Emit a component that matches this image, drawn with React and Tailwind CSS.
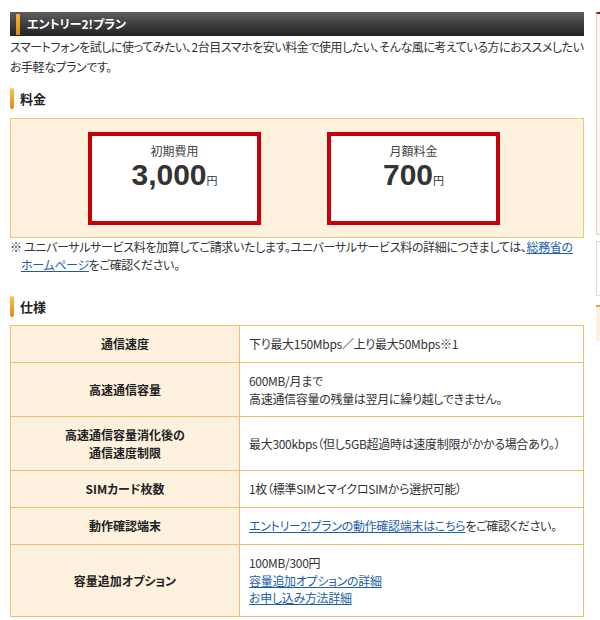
import React from 'react'

const SPEC = [
  { label: ['通信速度'], h: 'h-[37px]', body: <>下り最大150Mbps／上り最大50Mbps※1</> },
  { label: ['高速通信容量'], h: 'h-[54px]', body: <>600MB/月まで<br />高速通信容量の残量は翌月に繰り越しできません。</> },
  { label: ['高速通信容量消化後の', '通信速度制限'], h: 'h-[54px]', body: <>最大300kbps（但し5GB超過時は速度制限がかかる場合あり。）</> },
  { label: ['SIMカード枚数'], h: 'h-[37px]', body: <>1枚（標準SIMとマイクロSIMから選択可能）</> },
  {
    label: ['動作確認端末'], h: 'h-[37px]',
    body: <><a href="#" className="text-[#1d5ea8] underline">エントリー2!プランの動作確認端末はこちら</a>をご確認ください。</>,
  },
  {
    label: ['容量追加オプション'], h: 'h-[71px]',
    body: (
      <>
        100MB/300円<br />
        <a href="#" className="text-[#1d5ea8] underline">容量追加オプションの詳細</a><br />
        <a href="#" className="text-[#1d5ea8] underline">お申し込み方法詳細</a>
      </>
    ),
  },
]

function Heading({ children }) {
  return (
    <div className="flex items-center gap-[6px]">
      <div className="w-[4px] h-[21px] rounded-[2px] bg-linear-to-b from-[#f9c554] to-[#e08a00]" />
      <span className="text-[13px] font-bold text-[#222] leading-[21px]">{children}</span>
    </div>
  )
}

function PriceCard({ label, value }) {
  return (
    <div className="w-[173px] h-[93px] border-4 border-[#c8000a] bg-white flex flex-col items-center pt-[8px]">
      <div className="text-[12px] leading-[14px] text-[#444]">{label}</div>
      <div className="flex items-baseline text-[#333]">
        <span className="font-['Liberation_Sans',Arial,sans-serif] font-bold text-[30px] leading-[34px]">{value}</span>
        <span className="text-[11px] leading-[14px]">円</span>
      </div>
    </div>
  )
}

export default function App() {
  return (
    <div className="w-[600px] h-[620px] overflow-hidden bg-white flex font-['Noto_Sans_CJK_JP',sans-serif] [font-feature-settings:'palt'] text-[#333]">
      {/* main column */}
      <div className="ml-[10px] w-[574px] shrink-0 pt-[12px]">
        <div className="h-[24px] bg-linear-to-b from-[#5e5e5e] to-[#232323] flex items-center">
          <div className="ml-[6px] w-[4px] h-[21px] bg-linear-to-b from-[#f7b636] to-[#df8600]" />
          <span className="ml-[7px] text-[12px] font-bold text-white">エントリー2!プラン</span>
        </div>

        <p className="mt-[1px] text-[12px] leading-[20px] tracking-[-0.45px] whitespace-nowrap">
          スマートフォンを試しに使ってみたい、2台目スマホを安い料金で使用したい、そんな風に考えている方におススメしたい<br />
          お手軽なプランです。
        </p>

        <div className="mt-[11px]">
          <Heading>料金</Heading>
        </div>

        <div className="mt-[9px] h-[120px] border border-[#f2c57a] bg-[#fef1de] flex pl-[77px] pt-[13px] gap-[66px]">
          <PriceCard label="初期費用" value="3,000" />
          <PriceCard label="月額料金" value="700" />
        </div>

        <p className="text-[12px] leading-[18px] tracking-[-0.35px] pl-[11px] -indent-[11px] whitespace-nowrap">
          ※ ユニバーサルサービス料を加算してご請求いたします。ユニバーサルサービス料の詳細につきましては、
          <a href="#" className="text-[#1d5ea8] underline">総務省の<br />ホームページ</a>をご確認ください。
        </p>

        <div className="mt-[22px]">
          <Heading>仕様</Heading>
        </div>

        <div className="mt-[8px] border border-[#efbf6d] text-[12px]">
          {SPEC.map((row, i) => (
            <div key={i} className={`flex ${row.h} ${i < SPEC.length - 1 ? 'border-b border-[#efbf6d]' : ''}`}>
              <div className="w-[229px] shrink-0 bg-[#fef1de] border-r border-[#efbf6d] flex flex-col items-center justify-center font-bold leading-[18px] text-[#222]">
                {row.label.map(l => <span key={l}>{l}</span>)}
              </div>
              <div className="flex-1 flex items-center pl-[9px] leading-[17.5px] tracking-[-0.3px]">
                <div>{row.body}</div>
              </div>
            </div>
          ))}
        </div>
      </div>

      {/* sidebar edge */}
      <div className="ml-[12px] w-[200px] shrink-0 pt-[12px]">
        <div className="h-[223px] border border-[#ecd0d0] border-t-2 border-t-[#8e1b1b] bg-[#fdf3f3]" />
        <div className="mt-[6px] h-[55px] border border-[#dcdcdc] bg-white" />
        <div className="mt-[9px] h-[36px] border-t-2 border-[#f0a43a] bg-[#fef1de]" />
      </div>
    </div>
  )
}
